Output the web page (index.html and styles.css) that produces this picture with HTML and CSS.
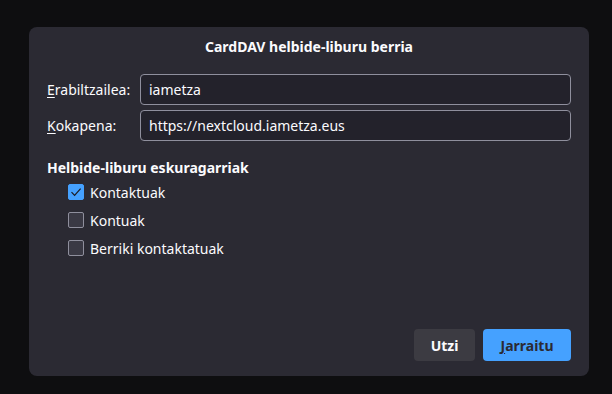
FILE: index.html
```html
<!DOCTYPE html>
<html>
<head>
<meta charset="utf-8">
<link rel="stylesheet" href="styles.css">
</head>
<body>
<div class="dialog">
  <h1 class="title">CardDAV helbide-liburu berria</h1>
  <div class="form">
    <label class="lbl"><u>E</u>rabiltzailea:</label>
    <div class="input">iametza</div>
    <label class="lbl"><u>K</u>okapena:</label>
    <div class="input">https://nextcloud.iametza.eus</div>
  </div>
  <h2 class="section">Helbide-liburu eskuragarriak</h2>
  <ul class="checks">
    <li class="check"><span class="box on"><svg viewBox="0 0 16 16" width="16" height="16"><path d="M3.5 8.2 L6.6 11.3 L12.6 4.6" fill="none" stroke="#1c1b22" stroke-width="1.2"/></svg></span>Kontaktuak</li>
    <li class="check"><span class="box"></span>Kontuak</li>
    <li class="check"><span class="box"></span>Berriki kontaktatuak</li>
  </ul>
  <div class="buttons">
    <button class="btn cancel">Utzi</button>
    <button class="btn primary"><u>J</u>arraitu</button>
  </div>
</div>
</body>
</html>
```
FILE: styles.css
```css
html, body {
  margin: 0;
  padding: 0;
  background: #0e0e10;
  width: 612px;
  height: 394px;
  overflow: hidden;
  font-family: "Noto Sans", "DejaVu Sans", sans-serif;
  color: #fbfbfe;
}
.dialog {
  box-sizing: border-box;
  margin: 27px 0 0 29px;
  width: 560px;
  height: 349px;
  background: #2b2a33;
  border-radius: 8px;
  padding: 10px 18px 15px 18px;
  display: flex;
  flex-direction: column;
}
.title {
  margin: 0;
  font-size: 14px;
  font-weight: 700;
  text-align: center;
  line-height: 20px;
}
.form {
  margin-top: 17px;
  display: grid;
  grid-template-columns: 93px 1fr;
  row-gap: 5px;
  align-items: center;
}
.lbl {
  font-size: 14px;
}
.lbl u {
  text-underline-offset: 2px;
}
.input {
  box-sizing: border-box;
  height: 31px;
  border: 1px solid #8f8f9d;
  border-radius: 4px;
  background: #23222b;
  font-size: 14px;
  line-height: 29px;
  padding: 0 8px;
}
.section {
  margin: 17px 0 0 0;
  font-size: 14px;
  font-weight: 700;
  line-height: 20px;
}
.checks {
  list-style: none;
  margin: 0 0 0 21px;
  padding: 0;
}
.check {
  display: flex;
  align-items: center;
  height: 28px;
  font-size: 14px;
}
.box {
  box-sizing: border-box;
  width: 16px;
  height: 16px;
  border: 1px solid #8f8f9d;
  border-radius: 2px;
  background: #3a3944;
  margin-right: 6px;
  display: flex;
}
.box.on {
  background: #45a1ff;
  border-color: #45a1ff;
}
.box svg {
  margin: -1px;
}
.buttons {
  margin-top: auto;
  display: flex;
  justify-content: flex-end;
  gap: 8px;
}
.btn {
  height: 32px;
  border: none;
  border-radius: 4px;
  font-family: inherit;
  font-size: 14px;
  font-weight: 700;
  padding: 0;
}
.cancel {
  width: 61px;
  background: #3c3b42;
  color: #fbfbfe;
}
.primary {
  width: 88px;
  background: #45a1ff;
  color: #2b2a33;
}
.primary u {
  text-underline-offset: 2px;
}
```
